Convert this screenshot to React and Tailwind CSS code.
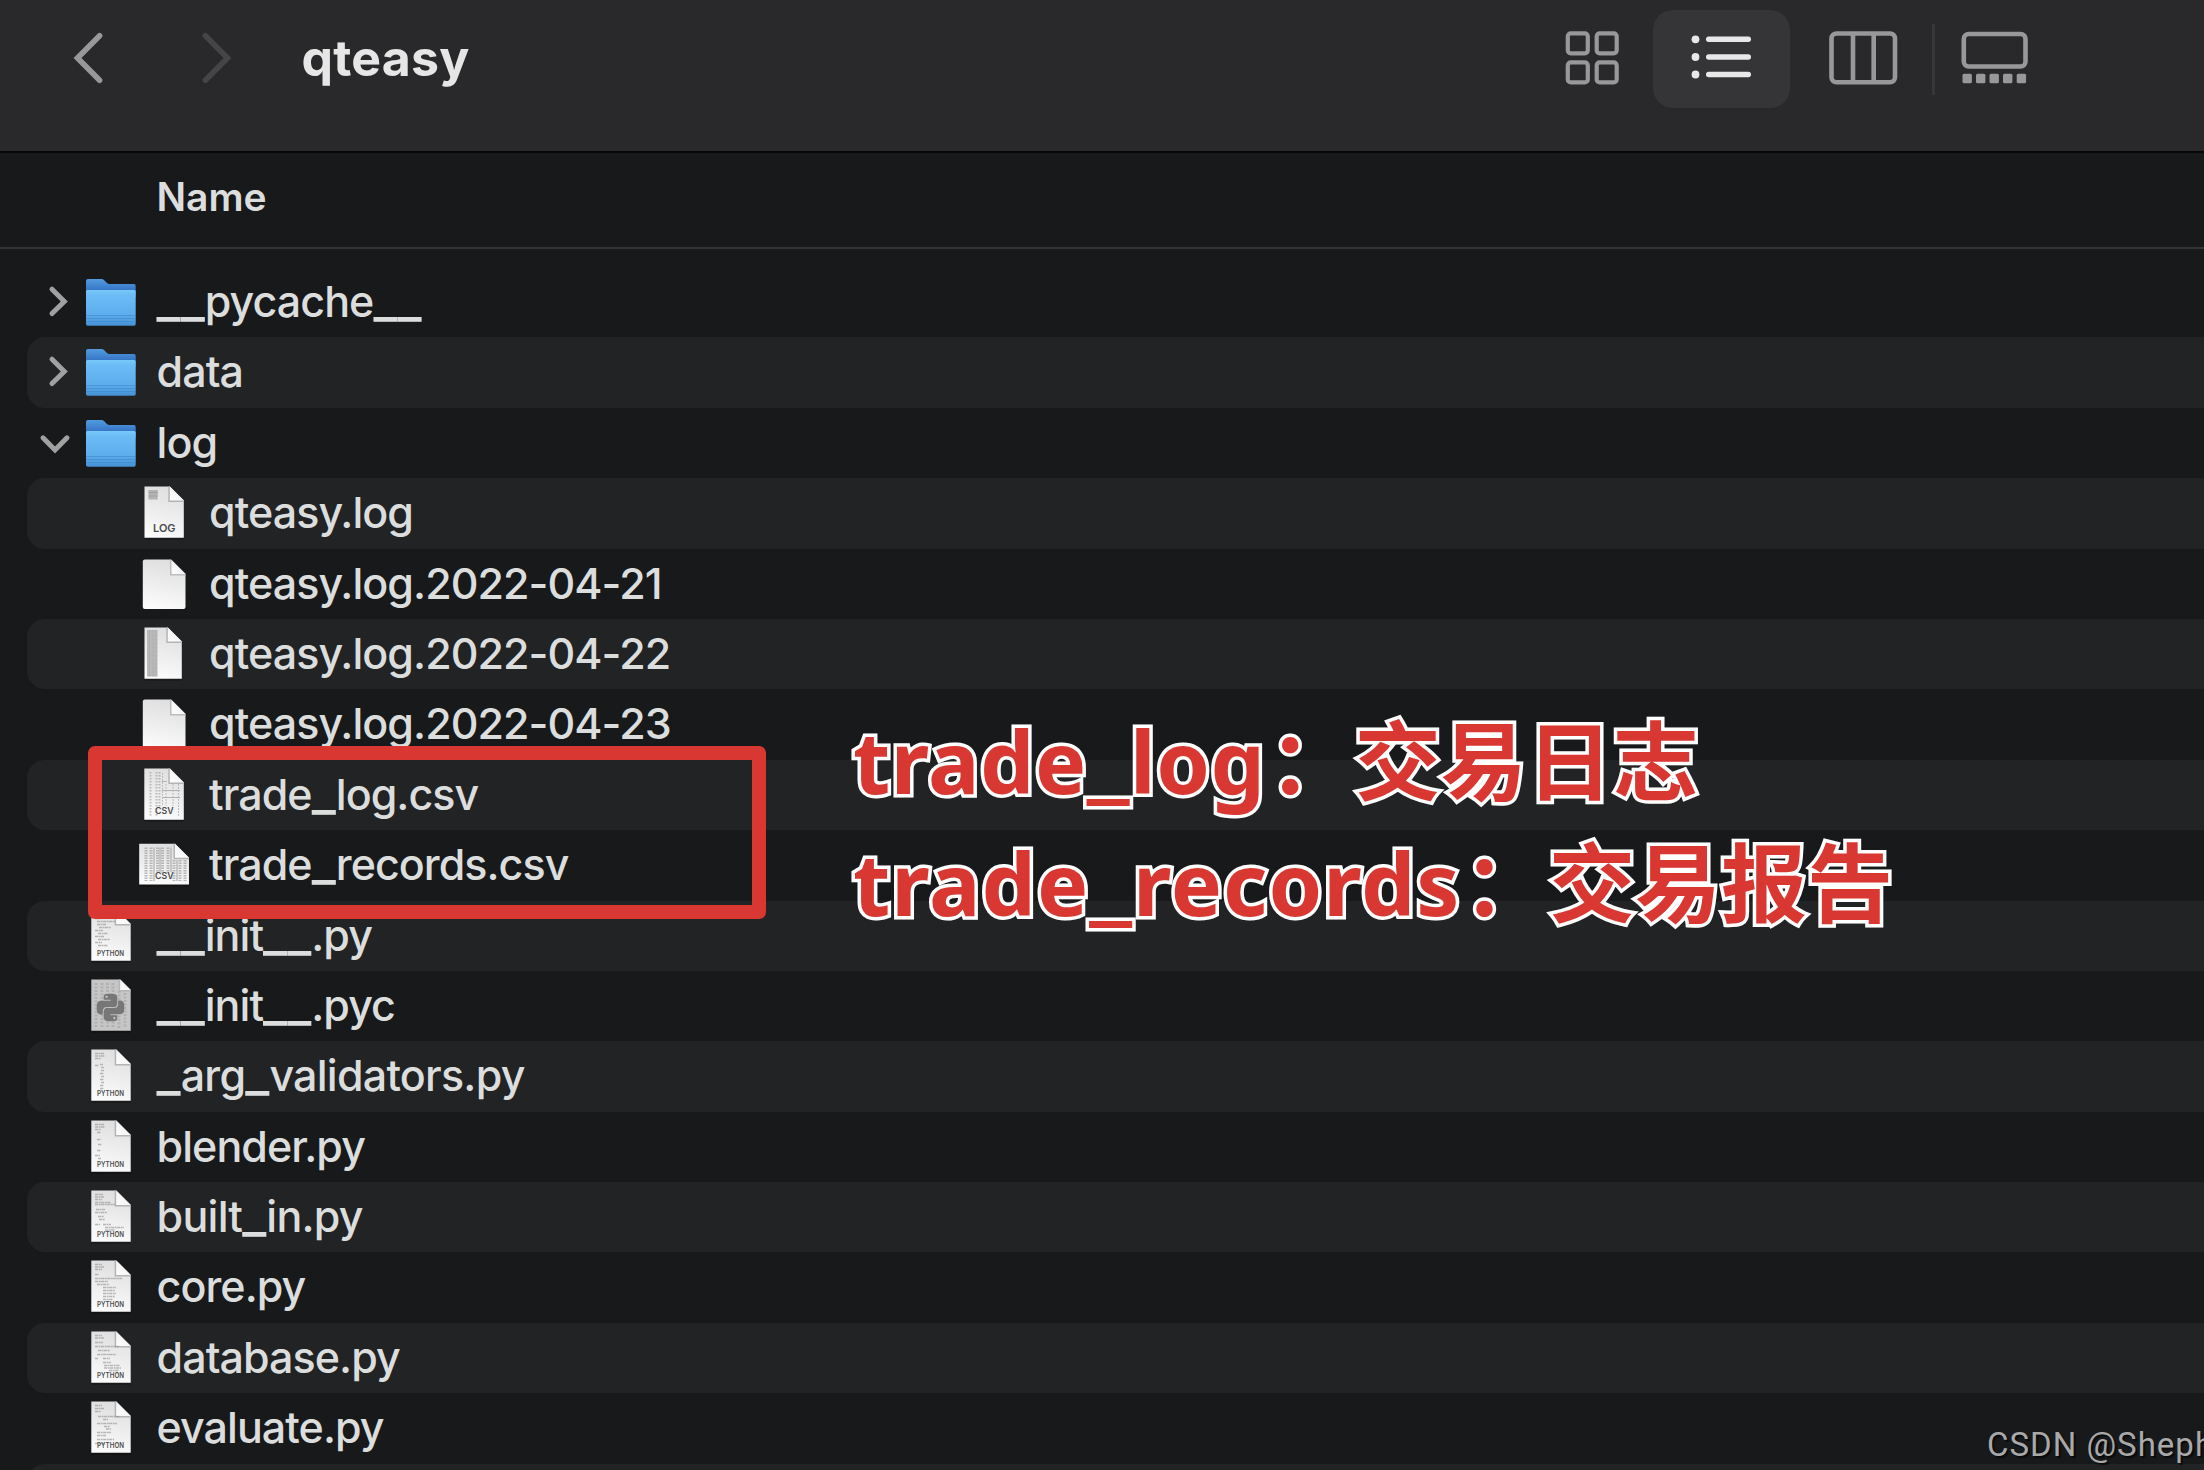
import { SiPython } from "react-icons/si";

const rows = [
  { name: "__pycache__", kind: "folder", arrow: "right" },
  { name: "data", kind: "folder", arrow: "right" },
  { name: "log", kind: "folder", arrow: "down" },
  { name: "qteasy.log", kind: "log", nested: true },
  { name: "qteasy.log.2022-04-21", kind: "blank", nested: true },
  { name: "qteasy.log.2022-04-22", kind: "strip", nested: true },
  { name: "qteasy.log.2022-04-23", kind: "blank", nested: true },
  { name: "trade_log.csv", kind: "csv", nested: true },
  { name: "trade_records.csv", kind: "csvWide", nested: true },
  { name: "__init__.py", kind: "py", code: [[0, 11, 8], [0, 14, 10], [0, 17, 6], [2, 20, 18], [2, 23, 9], [4, 26, 12], [0, 29, 8], [3, 32, 10], [0, 35, 9], [3, 38, 12], [0, 41, 7], [3, 44, 10]] },
  { name: "__init__.pyc", kind: "pyc" },
  { name: "_arg_validators.py", loose: true, kind: "py", code: [[0, 12, 9], [0, 14.5, 10], [0, 17, 6], [0, 24, 4], [5, 23, 3], [6, 26, 3], [6, 29, 3], [5, 32, 4], [6, 35, 3], [5, 38, 4], [6, 41, 3], [5, 44, 4], [5, 47, 4]] },
  { name: "blender.py", kind: "py", code: [[0, 12, 9], [0, 14.5, 10], [0, 17, 6], [2, 20, 4], [2, 27, 4], [3, 32, 4], [2, 38, 4], [0, 43, 5], [3, 46, 3]] },
  { name: "built_in.py", loose: true, kind: "py", code: [[0, 12, 8], [0, 14.5, 9], [0, 17, 7], [0, 20, 16], [0, 22, 20], [1, 27, 9], [0, 30, 12], [3, 34, 6], [4, 37, 6], [0, 42, 5], [8, 42, 8], [10, 45, 19], [10, 47.5, 10]] },
  { name: "core.py", kind: "py", code: [[0, 12, 7], [0, 14.5, 9], [0, 17, 7], [0, 22, 4], [0, 26, 27], [0, 29, 13], [2, 32, 12], [8, 35, 13], [8, 38, 12], [8, 41, 13], [8, 44, 12], [8, 47, 10]] },
  { name: "database.py", kind: "py", code: [[0, 12, 7], [0, 14.5, 9], [0, 19, 8], [0, 23, 24], [3, 27, 12], [2, 31, 19], [8, 35, 7], [0, 35, 3], [8, 39, 8], [9, 42, 16], [9, 44.5, 17], [14, 47, 10]] },
  { name: "evaluate.py", kind: "py", code: [[0, 12, 7], [0, 15, 9], [0, 18, 6], [3, 23, 22], [8, 26, 5], [2, 30, 20], [9, 33, 6], [11, 35.5, 5], [2, 39, 14], [2, 42, 9], [2, 46, 17], [0, 50, 10]] },
  { name: "", kind: "none" },
];

function Defs() {
  return (
    <svg className="absolute h-0 w-0">
      <defs>
        <linearGradient id="paper" x1="0.6" y1="0" x2="0.4" y2="1">
          <stop offset="0" stopColor="#dedede" />
          <stop offset="1" stopColor="#fbfbfb" />
        </linearGradient>
        <linearGradient id="fold" x1="1" y1="0" x2="0" y2="1">
          <stop offset="0.4" stopColor="#f4f4f4" />
          <stop offset="1" stopColor="#fdfdfd" />
        </linearGradient>
        <linearGradient id="folderBack" x1="0" y1="0" x2="0" y2="1">
          <stop offset="0" stopColor="#529bdf" />
          <stop offset="0.6" stopColor="#3877c8" />
        </linearGradient>
        <linearGradient id="folderFront" x1="0" y1="0" x2="0" y2="1">
          <stop offset="0" stopColor="#78caf8" />
          <stop offset="0.14" stopColor="#6bbcf6" />
          <stop offset="0.7" stopColor="#5cadec" />
          <stop offset="1" stopColor="#4590d3" />
        </linearGradient>
      </defs>
    </svg>
  );
}

function Sheet({ x1, x2, y1, y2, f, fill = "url(#paper)" }) {
  return (
    <>
      <path d={`M${x1} ${y2}H${x2}V${y2 + 2}H${x1}Z`} fill="#000" opacity="0.25" />
      <path d={`M${x1} ${y1}H${x2 - f}L${x2} ${y1 + f}V${y2}H${x1}Z`} fill={fill} />
      <path d={`M${x2 - f - 1.5} ${y1}V${y1 + f + 1.5}H${x2}V${y1 + f}L${x2 - f} ${y1}Z`} fill="#b4b4b4" />
      <path d={`M${x2 - f} ${y1}V${y1 + f}H${x2}Z`} fill="url(#fold)" />
    </>
  );
}

function Label({ x, y, w, size, children }) {
  return (
    <text x={x} y={y} fontSize={size} textLength={w} lengthAdjust="spacingAndGlyphs" fontWeight="600" fill="#4a4a4a" fontFamily="Inter, sans-serif">
      {children}
    </text>
  );
}

function Icon({ kind, code = [] }) {
  return (
    <svg className="h-[70px] w-[62px] shrink-0" viewBox="0 0 62 70">
      {kind === "folder" && (
        <>
          <path d="M6 14q0-2 2-2H21.500q1.500 0 2.500 1l3 3q1 1 2.500 1H54q1.700 0 1.700 2V30H6Z" fill="url(#folderBack)" />
          <path d="M6 24.500q0-1.500 1.500-1.500H54.200q1.500 0 1.500 1.500V57q0 1.700-1.700 1.700H7.700Q6 58.700 6 57Z" fill="url(#folderFront)" />
          <path d="M6 48.500H55.700M6 51.500H55.700M6 54.500H55.700" stroke="#3f88cb" strokeWidth="1" opacity="0.6" />
        </>
      )}
      {kind === "log" && (
        <>
          <Sheet x1={11.5} x2={50.8} y1={8.4} y2={59.7} f={14} />
          <path d="M15.500 12H24.700V21.500H15.500Z" fill="#b3b3b3" />
          <path d="M15.500 14.500H24.700M15.500 18H24.700" stroke="#a2a2a2" />
          <Label x={20} y={54.3} w={22.5} size={10.5}>LOG</Label>
        </>
      )}
      {kind === "blank" && (
        <>
          <path d="M9.800 12.400q0-2 2-2H38L52.500 25V58q0 2-2 2H11.800q-2 0-2-2Z" fill="url(#paper)" />
          <path d="M37 11V26.500H52.500V25L38 10.400Z" fill="#bdbdbd" />
          <path d="M38.500 11V24q0 1 1 1H52.500Z" fill="url(#fold)" />
        </>
      )}
      {kind === "strip" && (
        <>
          <Sheet x1={11.5} x2={48.8} y1={8.4} y2={59.7} f={14} />
          <path d="M14 11H24.500V57.500H14Z" fill="#b9b9b9" />
          <path d="M16.500 11V57.500M20 11V57.500M23 11V57.500" stroke="#aaa" strokeDasharray="3 1" opacity="0.7" />
        </>
      )}
      {kind === "csv" && (
        <>
          <Sheet x1={11.3} x2={50.8} y1={8.4} y2={59.7} f={14} />
          <path d="M17.500 12V56M23.500 12V56M26.500 12V47" stroke="#a9a9a9" strokeWidth="2" strokeDasharray="1.500 1.500" opacity="0.75" />
          <path d="M29.500 13V46M33 24V46M40 24V46M45.500 24V56" stroke="#bcbcbc" strokeWidth="1" strokeDasharray="2 1" />
          <path d="M29 21.500H34M29 30.500H47M29 37.500H47" stroke="#b0b0b0" strokeWidth="1" />
          <Label x={22} y={54.2} w={18.5} size={8.5}>CSV</Label>
        </>
      )}
      {kind === "csvWide" && (
        <>
          <Sheet x1={6.2} x2={56} y1={13.8} y2={54.5} f={14} />
          <path d="M13 17.500V51M18 17.500V51M24.500 17.500V43M29.500 17.500V43M35 17.500V43M41 30V51M47 30V51M52 30V51" stroke="#a0a0a0" strokeWidth="3" strokeDasharray="1.500 1" opacity="0.7" />
          <path d="M21 17.500V51M27 17.500V42M38 17.500V42M44 30V51" stroke="#bbb" strokeWidth="1.500" />
          <Label x={22} y={49} w={18.5} size={8.5}>CSV</Label>
        </>
      )}
      {kind === "py" && (
        <>
          <Sheet x1={11.3} x2={50.7} y1={8.4} y2={59.7} f={14.5} />
          {code.map(([x, y, w], i) => (
            <path key={i} d={`M${15 + x} ${y + 0.5}h${w}`} stroke="#969696" strokeWidth="1.400" strokeDasharray="3 0.600 2 0.500" opacity="0.65" />
          ))}
          <Label x={17} y={54.5} w={27} size={7.5}>PYTHON</Label>
        </>
      )}
      {kind === "pyc" && (
        <>
          <Sheet x1={11.3} x2={50.7} y1={8.4} y2={59.7} f={10.5} fill="#c6c6c6" />
          <path d="M16 12V57M22 12V57M27.500 12V57M33 12V57M39 20V57M45 22V57" stroke="#adadad" strokeWidth="3" strokeDasharray="2 1.500" opacity="0.8" />
          <SiPython x={16.5} y={22.5} size={28} color="#777" />
        </>
      )}
    </svg>
  );
}

function Arrow({ dir }) {
  return (
    <svg className="h-[70px] w-[53px] shrink-0" viewBox="0 0 53 70" fill="none" stroke="#a0a1a1" strokeWidth="5" strokeLinecap="round" strokeLinejoin="miter">
      {dir === "right" && <path d="M25 22.200L37.300 34.400L25 46.600" />}
      {dir === "down" && <path d="M16 29.800L28 42L40 29.800" />}
    </svg>
  );
}

function Name({ text, loose }) {
  return (
    <span className={"ml-[14.600px] text-[43px] leading-[68px] font-medium whitespace-nowrap text-[#dcdddd] " + (loose ? "tracking-[-0.75px]" : "tracking-[-0.95px]")}>
      {text.split(/(_+)/).map((part, i) =>
        part.startsWith("_") ? (
          <span key={i} className="text-[52px] leading-none tracking-normal">{part}</span>
        ) : (
          part
        )
      )}
    </span>
  );
}

function Note({ head, tail, headClass, tailClass }) {
  return (
    <p className="[-webkit-text-stroke:7px_#fff] [paint-order:stroke_fill]">
      <span className={"font-['Noto_Sans',sans-serif] leading-none " + headClass}>
        trade<span className="[vertical-align:4px] text-[104px] leading-none">_</span>{head}
      </span>
      <span className={tailClass}>：{tail}</span>
    </p>
  );
}

export default function App() {
  return (
    <div className="relative h-[1470px] w-[2204px] overflow-hidden bg-[#18191b] font-['Inter',sans-serif]">
      <Defs />
      <header className="h-[151px] bg-[#29292b]">
        <div className="flex h-[115px] items-center">
          <svg className="ml-[70px] h-[60px] w-[40px]" viewBox="0 0 40 60" fill="none" stroke="#98989a" strokeWidth="5.600" strokeLinecap="round" strokeLinejoin="miter">
            <path d="M29.600 7.700L7.500 30L29.600 52.300" />
          </svg>
          <svg className="ml-[88px] h-[60px] w-[40px]" viewBox="0 0 40 60" fill="none" stroke="#454547" strokeWidth="5.600" strokeLinecap="round" strokeLinejoin="miter">
            <path d="M7.400 7.700L29.500 30L7.400 52.300" />
          </svg>
          <h1 className="ml-[63.500px] w-[1258.500px] text-[50px] leading-[60px] font-bold tracking-[0.200px] text-[#e6e6e6]">qteasy</h1>
          <svg className="h-[60px] w-[66px]" viewBox="0 0 66 60" fill="none" stroke="#98989a" strokeWidth="4.200">
            <rect x="7.800" y="5.300" width="20" height="20" rx="3" />
            <rect x="36.700" y="5.300" width="20" height="20" rx="3" />
            <rect x="7.800" y="34.400" width="20" height="20" rx="3" />
            <rect x="36.700" y="34.400" width="20" height="20" rx="3" />
          </svg>
          <div className="mt-[3px] ml-[27px] flex h-[98px] w-[137px] items-center justify-center rounded-[20px] bg-[#353537]">
            <svg className="mb-[4px] h-[60px] w-[68px]" viewBox="0 0 68 60" fill="#e8e8e8">
              <circle cx="7.500" cy="12.300" r="3.900" />
              <circle cx="7.500" cy="30" r="3.900" />
              <circle cx="7.500" cy="47.500" r="3.900" />
              <rect x="18" y="9.600" width="45" height="5.400" rx="2.700" />
              <rect x="18" y="27.300" width="45" height="5.400" rx="2.700" />
              <rect x="18" y="44.800" width="45" height="5.400" rx="2.700" />
            </svg>
          </div>
          <svg className="ml-[35px] h-[60px] w-[76px]" viewBox="0 0 76 60" fill="none" stroke="#98989a" strokeWidth="4.600">
            <rect x="6.500" y="5.500" width="63.500" height="48.800" rx="5" />
            <path d="M28 6V54M48.700 6V54" />
          </svg>
          <div className="mt-[4px] ml-[31px] h-[71px] w-[3px] bg-[#373739]" />
          <svg className="ml-[20px] h-[60px] w-[80px]" viewBox="0 0 80 60" fill="none" stroke="#98989a" strokeWidth="4.600">
            <rect x="8.800" y="6" width="61.700" height="32.500" rx="5" />
            <g fill="#98989a" stroke="none">
              <rect x="7.500" y="45.800" width="9.400" height="9.400" rx="1.500" />
              <rect x="21" y="45.800" width="9.400" height="9.400" rx="1.500" />
              <rect x="34.500" y="45.800" width="9.400" height="9.400" rx="1.500" />
              <rect x="48" y="45.800" width="9.400" height="9.400" rx="1.500" />
              <rect x="61.700" y="45.800" width="9.400" height="9.400" rx="1.500" />
            </g>
          </svg>
        </div>
      </header>
      <div className="flex h-[98px] items-center border-t-2 border-b-2 border-t-[#060607] border-b-[#333436] pl-[156.500px] text-[39px] leading-[60px] font-semibold text-[#dcdddd]">
        <span className="pb-[7px]">Name</span>
      </div>
      <ul className="pt-[18px] pl-[27px]">
        {rows.map((r, i) => (
          <li key={i} className={"flex h-[70.4px] items-start " + (i % 2 ? "rounded-l-[18px] bg-[#222325]" : "")}>
            {r.nested && <span className="w-[52.500px] shrink-0" />}
            <Arrow dir={r.arrow} />
            <Icon kind={r.kind} code={r.code} />
            <Name text={r.name} loose={r.loose} />
          </li>
        ))}
      </ul>

      <div className="absolute top-[746px] left-[88px] h-[173px] w-[678px] rounded-[7px] border-[14px] border-[#d93832]" />
      <div className="absolute top-[696px] left-[853px] font-['Noto_Sans_CJK_SC',sans-serif] text-[86px] leading-[122px] font-bold whitespace-nowrap text-[#d93832]">
        <Note head="log" tail="交易日志" headClass="tracking-[0.500px]" tailClass="ml-[3.500px]" />
        <Note head="records" tail="交易报告" headClass="tracking-[1px]" tailClass="ml-[2.500px]" />
      </div>
      <div className="absolute top-[1425px] left-[1987px] font-['Roboto',sans-serif] text-[33px] leading-[40px] tracking-[1px] whitespace-nowrap text-[#a9a9aa] [text-shadow:2px_2px_1px_rgba(0,0,0,0.6)]">
        CSDN @Sheph
      </div>
    </div>
  );
}
